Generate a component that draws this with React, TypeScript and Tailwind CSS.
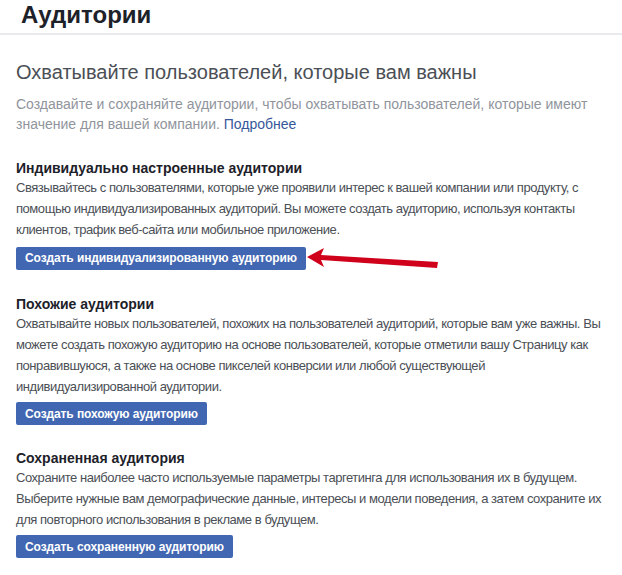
export default function App() {
  return (
    <div className="min-h-[575px] w-[622px] bg-white font-['Liberation_Sans',Arial,sans-serif]">
      <div className="border-b-2 border-[#e9eaed] px-[21px] pb-[3px]">
        <h1 className="text-[24px] font-bold leading-[30px] text-[#1d2129]">Аудитории</h1>
      </div>
      <div className="px-[16px] pt-[24px]">
        <h2 className="text-[20px] leading-[26px] text-[#4b4f56]">
          Охватывайте пользователей, которые вам важны
        </h2>
        <p className="mt-[9px] text-[14px] leading-[20px] text-[#90949c]">
          Создавайте и сохраняйте аудитории, чтобы охватывать пользователей, которые имеют значение для вашей
          компании. <a className="text-[#365899]">Подробнее</a>
        </p>

        <Section
          title="Индивидуально настроенные аудитории"
          text="Связывайтесь с пользователями, которые уже проявили интерес к вашей компании или продукту, с помощью индивидуализированных аудиторий. Вы можете создать аудиторию, используя контакты клиентов, трафик веб-сайта или мобильное приложение."
          button="Создать индивидуализированную аудиторию"
          arrow
        />
        <Section
          title="Похожие аудитории"
          text="Охватывайте новых пользователей, похожих на пользователей аудиторий, которые вам уже важны. Вы можете создать похожую аудиторию на основе пользователей, которые отметили вашу Страницу как понравившуюся, а также на основе пикселей конверсии или любой существующей индивидуализированной аудитории."
          button="Создать похожую аудиторию"
        />
        <Section
          title="Сохраненная аудитория"
          text="Сохраните наиболее часто используемые параметры таргетинга для использования их в будущем. Выберите нужные вам демографические данные, интересы и модели поведения, а затем сохраните их для повторного использования в рекламе в будущем."
          button="Создать сохраненную аудиторию"
        />
      </div>
    </div>
  );
}

type SectionProps = {
  title: string;
  text: string;
  button: string;
  arrow?: boolean;
};

function Section({ title, text, button, arrow }: SectionProps) {
  return (
    <div className="mt-[24px] first-of-type:mt-[25px]">
      <h3 className="text-[14px] font-bold leading-[18px] text-[#1d2129]">{title}</h3>
      <p className="w-[596px] text-[13px] leading-[21px] tracking-[-0.45px] text-[#4b4f56]">{text}</p>
      <div className="mt-[5px] flex items-center">
        <button className="h-[23px] rounded-[2px] bg-[#4267b2] px-[9px] text-[12px] font-bold tracking-[-0.1px] text-white">
          {button}
        </button>
        {arrow && (
          <svg width="134" height="26" viewBox="0 0 134 26" className="ml-[1px]">
            <polygon points="0,12 17,3 14,10 131,17 130,23 14,15 17,22" fill="#d0021b" />
          </svg>
        )}
      </div>
    </div>
  );
}
